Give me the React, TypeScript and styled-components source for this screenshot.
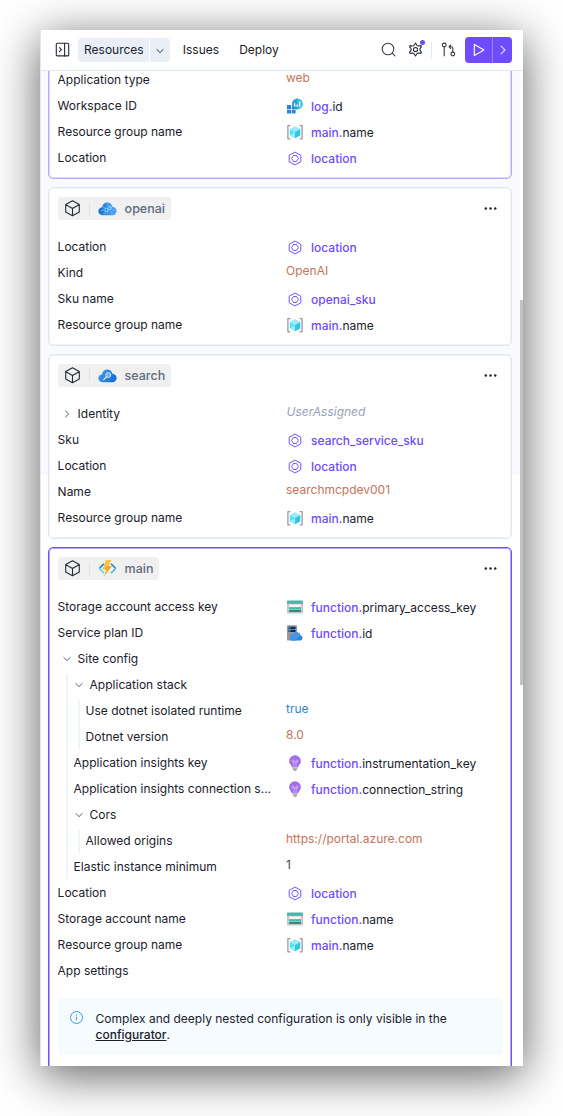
import React from "react";
import styled, { createGlobalStyle } from "styled-components";

const GlobalStyle = createGlobalStyle`
  *, *::before, *::after { box-sizing: border-box; }
  body {
    margin: 0;
    background: #fff;
    font-family: Inter, "Liberation Sans", sans-serif;
    font-size: 12px;
    color: #1b202b;
  }
  svg { display: block; flex: none; }
`;

const Stage = styled.main`
  height: 1116px;
  padding: 30px 40px 50px;
  overflow: hidden;
`;

const Panel = styled.section`
  display: flex;
  flex-direction: column;
  width: 483px;
  height: 1036px;
  background: #fff;
  border-left: 1px solid #e3e8f0;
  box-shadow: 0 9px 44px rgba(0, 0, 0, 0.64);
`;

const Toolbar = styled.header`
  display: flex;
  align-items: center;
  flex: none;
  height: 41px;
  padding: 0 11px 1px 14px;
  border-bottom: 1px solid #e1e7ef;
`;

const Tab = styled.div<{ $gap: number }>`
  margin-left: ${(p) => p.$gap}px;
  line-height: 24px;
`;

const SplitTab = styled.div`
  display: flex;
  height: 24px;
  margin-left: 8px;
  border-radius: 4px;
  overflow: hidden;
  line-height: 24px;
`;

const SplitLabel = styled.span`
  width: 71px;
  padding-left: 6px;
  background: #eaeff7;
`;

const SplitToggle = styled.span`
  display: flex;
  align-items: center;
  justify-content: center;
  width: 20px;
  margin-left: 1px;
  padding-top: 2px;
  background: #eaeff7;
`;

const Tools = styled.div`
  display: flex;
  align-items: center;
  margin-left: auto;
`;

const ToolSlot = styled.span<{ $gap: number }>`
  position: relative;
  margin-right: ${(p) => p.$gap}px;
`;

const Dot = styled.i`
  position: absolute;
  top: -2px;
  right: -1.5px;
  width: 5px;
  height: 5px;
  border-radius: 50%;
  background: #6d4aff;
`;

const ToolDivider = styled.i`
  width: 1px;
  height: 16px;
  margin-right: 9px;
  background: #e3e9f1;
`;

const RunButton = styled.div`
  display: flex;
  width: 47px;
  height: 26px;
  border-radius: 4px;
  overflow: hidden;
  background: #6f4bff;
`;

const RunPart = styled.span<{ $width: number; $line?: boolean }>`
  display: flex;
  align-items: center;
  justify-content: center;
  width: ${(p) => p.$width}px;
  border-left: ${(p) => (p.$line ? "1px solid #9c83ff" : "0")};
`;

const Body = styled.div`
  display: flex;
  flex: 1;
  min-height: 0;
  background: linear-gradient(#f9faff 404px, #fff 404px);
`;

const Cards = styled.div`
  display: flex;
  flex-direction: column;
  gap: 8px;
  width: 479px;
  padding: 0 8px 0 7px;
  overflow: hidden;
`;

const ScrollTrack = styled.div`
  width: 3px;
  padding-top: 229px;
  background: #fdfdff;
`;

const ScrollThumb = styled.div`
  height: 385px;
  background: #c3c3c5;
`;

type Tone = "plain" | "linked" | "selected";
const tones: Record<Tone, [string, string]> = {
  plain: ["#e0e7f1", "#f0f4f9"],
  linked: ["#b5aafc", "#dcd6fe"],
  selected: ["#7450f5", "#b5a2fa"],
};

const Card = styled.article<{ $tone: Tone; $clip?: "top" | "bottom" }>`
  flex: none;
  padding: 9px 8.4px 7px 8.6px;
  background: #fff;
  border: 1px solid ${(p) => tones[p.$tone][0]};
  box-shadow: inset 0 0 0 1px ${(p) => tones[p.$tone][1]};
  border-radius: 5px;
  ${(p) => p.$clip === "top" && "margin-top: -5px; padding-top: 0;"}
  ${(p) => p.$clip === "bottom" && "height: 540px;"}
`;

const CardHead = styled.div`
  display: flex;
  align-items: center;
  justify-content: space-between;
  height: 23px;
  margin-bottom: 14px;
  padding-right: 5.6px;
`;

const Chip = styled.div`
  display: flex;
  align-items: center;
  height: 23px;
  padding: 0 6px 0 7.4px;
  background: #f0f0f1;
  border-radius: 4px;
  color: #5f6b7d;
  font-size: 12.5px;
  font-weight: 500;
`;

const ChipDivider = styled.i`
  width: 1px;
  height: 13px;
  margin: 0 8px 0 9px;
  background: #dce2ea;
`;

const ChipIcon = styled.span`
  margin-right: 7.6px;
`;

const RowLine = styled.div<{ $nested?: boolean }>`
  display: flex;
  height: 26px;
  padding-left: ${(p) => (p.$nested ? 4 : 0)}px;
`;

const Label = styled.div`
  flex: 1;
  min-width: 0;
  padding-right: 12px;
  line-height: 26px;
  white-space: nowrap;
  overflow: hidden;
  text-overflow: ellipsis;
`;

const GroupLabel = styled.div`
  display: flex;
  flex: 1;
  align-items: center;
  gap: 5.5px;
  padding-left: 4.5px;
  line-height: 26px;
`;

const ValueCell = styled.div`
  display: flex;
  align-items: center;
  flex: none;
  width: 216.6px;
  height: 26px;
`;

const Literal = styled.span<{ $kind: Kind }>`
  line-height: 22px;
  height: 26px;
  padding-left: ${(p) => (p.$kind === "muted" ? 0.6 : 0)}px;
  font-style: ${(p) => (p.$kind === "muted" ? "italic" : "normal")};
  color: ${(p) => ({ string: "#c3745a", bool: "#3182ce", number: "#3f4857", muted: "#94a3b8" })[p.$kind]};
`;

const RefText = styled.span`
  margin-left: 8px;
  line-height: 28px;
  height: 26px;
  b { font-weight: 500; color: #6f4bff; }
`;

const RefIcon = styled.span`
  width: 16px;
  margin-left: 1px;
`;

const Nest = styled.div`
  padding-left: 12px;
  background: linear-gradient(#f0f3f8, #f0f3f8) 8px 2px / 2px calc(100% - 3px) no-repeat;
`;

const Notice = styled.aside`
  display: flex;
  height: 56px;
  margin: 14px 0 0;
  padding: 13px 12.4px;
  gap: 12.6px;
  background: #f5fbff;
  border-radius: 4px;
  line-height: 16px;
  p { margin: 0; }
  u { font-weight: 500; text-underline-offset: 1px; }
`;

type Kind = "string" | "bool" | "number" | "muted";

const Chevron = ({ down, size = 10, color = "#5b626e" }: { down?: boolean; size?: number; color?: string }) => (
  <svg width={size} height={size} viewBox="0 0 10 10" fill="none" stroke={color} strokeWidth="1" strokeLinecap="round" strokeLinejoin="round">
    <path d={down ? "M1.8 3.5 5 6.6l3.2-3.1" : "M3.5 1.8 6.6 5 3.5 8.2"} />
  </svg>
);

const HexIcon = () => (
  <svg width="16" height="16" viewBox="0 0 16 16" fill="none" stroke="#6f4bff" strokeWidth=".95">
    <path d="M8 2.1 13.8 5.2v6.6L8 14.9l-5.8-3.1V5.2z" strokeLinejoin="round" />
    <path d="M6.5 5.5h3l1.9 3-1.9 3h-3l-1.9-3z" strokeLinejoin="round" />
  </svg>
);

const GroupIcon = () => (
  <svg width="16" height="16" viewBox="0 0 16 16">
    <path d="M3.4 1.7H.9v13.1h2.5M12.6 1.7h2.5v13.1h-2.5" fill="none" stroke="#9b9b9d" strokeWidth="1.3" strokeLinejoin="round" />
    <path d="M8 2.5 13.2 5.3v6L8 14.2l-5.2-2.9v-6z" fill="#50e2ff" />
    <path d="M8 2.5 13.2 5.3 8 8.3 2.8 5.3z" fill="#9cecff" />
    <path d="M8 8.3l5.2-3v6L8 14.2z" fill="#32c6e4" />
    <path d="M2.8 11.3 8 8.3v5.9z" fill="#9cecff" />
  </svg>
);

const LogIcon = () => (
  <svg width="16" height="16" viewBox="0 0 16 16">
    <path d="M0 7h4v4H0zM0 11.7h4v3.8H0zM4.7 11.7h3.9v3.8H4.7z" fill="#2b82dc" />
    <circle cx="10.5" cy="6" r="5.4" fill="#32c4e6" />
    <path d="M10.5.6A5.4 5.4 0 0 0 5 6v5.3h5.5z" fill="#2aa5d2" />
    <path d="M7.7 5.2v3.5M10.2 6.5v2.2M12.7 3.5v5.2" stroke="#fff" strokeWidth="1.3" />
    <path d="M4.7 9.2h3.7V11H4.7z" fill="#2b82dc" />
  </svg>
);

const StorageIcon = () => (
  <svg width="16" height="16" viewBox="0 0 16 16">
    <path d="M0 2h16v11.6a.8.8 0 0 1-.8.8H.8a.8.8 0 0 1-.8-.8z" fill="#c5c8c9" />
    <path d="M0 2.4a.9.9 0 0 1 .9-.9h14.2a.9.9 0 0 1 .9.9v2.3H0z" fill="#37bda9" />
    <path d="M2 5.7h12v2H2z" fill="#fff" />
    <path d="M2 8.3h12v2H2z" fill="#37bda9" />
    <path d="M2 11h12v1.9H2z" fill="#288577" />
  </svg>
);

const PlanIcon = () => (
  <svg width="16" height="16" viewBox="0 0 16 16">
    <rect x="0" y=".3" width="10" height="15.2" rx=".8" fill="#96989c" />
    <path d="M1.5 1.8h7V4h-7zM1.5 4.8h7V7h-7z" fill="#003067" />
    <path d="M2.2 2.3h1.3v1.2H2.2zM2.2 5.3h1.3v1.2H2.2z" fill="#50c8f5" />
    <path d="M6.2 15.5a3 3 0 0 1-.3-6A4.1 4.1 0 0 1 13.6 10.4a2.6 2.6 0 0 1-.2 5.1z" fill="#2f82e5" />
    <path d="M5.9 9.5a4.1 4.1 0 0 1 7.7.9L7.8 15.5H6.2a3 3 0 0 1-.3-6z" fill="#4696f1" />
  </svg>
);

const BulbIcon = () => (
  <svg width="16" height="16" viewBox="0 0 16 16">
    <path d="M8 .3a5.8 5.8 0 0 1 5.9 5.6c0 2.9-2.3 4-3 6.6H5.1c-.7-2.6-3-3.7-3-6.6A5.8 5.8 0 0 1 8 .3z" fill="#a36ee9" />
    <path d="M6.9 12.3V6c0-1.5-2.1-1.5-2.1 0 0 .8.8 1 2.1 1h2.2c1.3 0 2.1-.2 2.1-1 0-1.5-2.1-1.5-2.1 0v6.3" fill="none" stroke="#d6bdfa" strokeWidth=".8" />
    <path d="M5.8 13h4.4v1.5L8.9 15.9H7.1l-1.3-1.4z" fill="#b0b1b4" />
  </svg>
);

const CubeIcon = () => (
  <svg width="15" height="17" viewBox="0 0 15 17" fill="none" stroke="#252b37" strokeWidth="1.1" strokeLinejoin="round" strokeLinecap="round">
    <path d="M7.5 .8 14.3 4.6v7.4L7.5 15.8 .7 12V4.6zM.9 4.7l6.6 3.7 6.6-3.7M7.5 8.4v7.4" />
  </svg>
);

const cloudPath = "M4.5 13.2A4.3 4.3 0 0 1 .4 9.1c0-2 1.5-3.6 3.6-3.9C4.5 2.4 6.6.6 9.3.6c2.6 0 4.6 1.6 5.2 4.2 2.3.2 4.1 1.8 4.1 4.1 0 2.4-1.8 4.3-4.3 4.3z";

const OpenAiIcon = () => (
  <svg width="19" height="14" viewBox="0 0 19 14">
    <defs>
      <linearGradient id="brain" x1="0" x2="1"><stop stopColor="#1671cc" /><stop offset="1" stopColor="#55a5f8" /></linearGradient>
    </defs>
    <path d={cloudPath} fill="url(#brain)" />
    <path d="M9.4.9v4M9.4 9.2v4M5.2 3.5v2.2h2.3M6.1 13v-2.7h2M10.5 3.5h2v2.4h2M14 13v-3h-3" fill="none" stroke="#8bc8f7" strokeWidth=".5" />
    <path d="M7 6.3h3v3H7zM10.8 4.8h2.4v2.7h-2.4z" fill="none" stroke="#91e2fb" strokeWidth=".8" />
    <path d="M2.8 8.5h2.4V7M14.2 8.5h2.5" fill="none" stroke="#91d0fb" strokeWidth=".5" />
  </svg>
);

const SearchServiceIcon = () => (
  <svg width="19" height="14" viewBox="0 0 19 14">
    <defs>
      <linearGradient id="cloud" x1="0" x2="1" y2=".3"><stop stopColor="#4c99ef" /><stop offset="1" stopColor="#1472d3" /></linearGradient>
    </defs>
    <path d={cloudPath} fill="url(#cloud)" />
    <circle cx="10.3" cy="6" r="2.5" fill="#76b1f5" stroke="#e3f0ff" strokeWidth=".8" />
    <path d="m8.3 8-2.6 2.6" stroke="#e3f0ff" strokeWidth="1.1" strokeLinecap="round" />
  </svg>
);

const FunctionIcon = () => (
  <svg width="19" height="17" viewBox="0 0 19 17" fill="none">
    <path d="M6 3.8 1.3 8.5" stroke="#1580d8" strokeWidth="1.6" />
    <path d="M1.2 8.3 6 13.2" stroke="#50d4f6" strokeWidth="1.6" />
    <path d="m13 3.8 4.7 4.7" stroke="#1580d8" strokeWidth="1.6" />
    <path d="M17.8 8.3 13 13.2" stroke="#32bce7" strokeWidth="1.6" />
    <path d="M8 .3h5.1L10 6.1h4L5.8 16.7 8.4 9.5H4.8z" fill="#faa51e" />
    <path d="M8 .3h5.1L10 6.1 6.6 9.5H4.8z" fill="#ffc13b" />
  </svg>
);

const MoreIcon = () => (
  <svg width="13" height="5" viewBox="0 0 13 5" fill="#1e2939">
    <circle cx="1.8" cy="2.5" r="1.25" /><circle cx="6.5" cy="2.5" r="1.25" /><circle cx="11.2" cy="2.5" r="1.25" />
  </svg>
);

const PanelIcon = () => (
  <svg width="15" height="15" viewBox="0 0 15 15" fill="none" stroke="#252b36" strokeWidth="1.1" strokeLinejoin="round">
    <rect x="1.3" y="1.3" width="12.4" height="12.6" rx="1" />
    <path d="M9.6 1.3v12.6M4.4 5.6l2 2-2 2" strokeLinecap="round" />
  </svg>
);

const SearchIcon = () => (
  <svg width="15" height="15" viewBox="0 0 15 15" fill="none" stroke="#3b4350" strokeWidth="1.1" strokeLinecap="round">
    <circle cx="7" cy="7" r="5.8" /><path d="m11.2 11.2 2.7 2.7" />
  </svg>
);

const GearIcon = () => (
  <svg width="15" height="15" viewBox="0 0 24 24" fill="none" stroke="#252b36" strokeWidth="1.7" strokeLinejoin="round">
    <path d="M10.3 4.3 12 1.6l1.7 2.7 1.2 1.8 2.2.2 3.8-.5.5 1.9-2.2 2.9v2.8l2.2 2.9-.5 1.9-3.8-.5-2.2.2-1.2 1.8L12 22.4l-1.7-2.7-1.2-1.8-2.2-.2-3.8.5-.5-1.9 2.2-2.9v-2.8L2.6 7.7l.5-1.9 3.8.5 2.2-.2z" />
    <circle cx="12" cy="12" r="3.3" />
  </svg>
);

const BranchIcon = () => (
  <svg width="15" height="15" viewBox="0 0 15 15" fill="none" stroke="#353c48" strokeWidth="1.1" strokeLinecap="round" strokeLinejoin="round">
    <circle cx="3.2" cy="3" r="1.9" /><circle cx="11.8" cy="12" r="1.9" />
    <path d="M3.2 4.9v8.9M11.8 10.1V6.2c0-1-.5-1.5-1.5-1.5H8.2M9.7 3 8 4.7l1.7 1.7" />
  </svg>
);

const PlayIcon = () => (
  <svg width="12" height="14" viewBox="0 0 12 14" fill="none" stroke="#fff" strokeWidth="1.1" strokeLinejoin="round">
    <path d="M1.3 1.4 11 7l-9.7 5.6z" />
  </svg>
);

const InfoIcon = () => (
  <svg width="13" height="13" viewBox="0 0 13 13" fill="none" stroke="#3c97d9" strokeWidth="1">
    <circle cx="6.5" cy="6.5" r="6" /><path d="M6.5 5.7v3.6M6.5 3.4v1.1" />
  </svg>
);

const icons = { hex: HexIcon, group: GroupIcon, log: LogIcon, storage: StorageIcon, plan: PlanIcon, bulb: BulbIcon };

type RowProps = {
  label: string;
  nested?: boolean;
  icon?: keyof typeof icons;
  target?: string;
  attr?: string;
  value?: string;
  kind?: Kind;
};

const Row = ({ label, nested, icon, target, attr, value, kind = "string" }: RowProps) => {
  const Icon = icon && icons[icon];
  return (
    <RowLine $nested={nested}>
      <Label>{label}</Label>
      <ValueCell>
        {Icon && <RefIcon><Icon /></RefIcon>}
        {target && <RefText><b>{target}{attr && "."}</b>{attr}</RefText>}
        {value && <Literal $kind={kind}>{value}</Literal>}
      </ValueCell>
    </RowLine>
  );
};

const Group = ({ label, open, value, children }: { label: string; open?: boolean; value?: string; children?: React.ReactNode }) => (
  <>
    <RowLine>
      <GroupLabel><Chevron down={open} />{label}</GroupLabel>
      <ValueCell>{value && <Literal $kind="muted">{value}</Literal>}</ValueCell>
    </RowLine>
    {open && <Nest>{children}</Nest>}
  </>
);

const Head = ({ name, icon }: { name: string; icon: React.ReactNode }) => (
  <CardHead>
    <Chip><CubeIcon /><ChipDivider /><ChipIcon>{icon}</ChipIcon>{name}</Chip>
    <MoreIcon />
  </CardHead>
);

const Location = () => <Row label="Location" icon="hex" target="location" />;
const ResourceGroup = () => <Row label="Resource group name" icon="group" target="main" attr="name" />;

export default function App() {
  return (
    <Stage>
      <GlobalStyle />
      <Panel>
        <Toolbar>
          <PanelIcon />
          <SplitTab>
            <SplitLabel>Resources</SplitLabel>
            <SplitToggle><Chevron down color="#252b36" /></SplitToggle>
          </SplitTab>
          <Tab $gap={12.8}>Issues</Tab>
          <Tab $gap={20}>Deploy</Tab>
          <Tools>
            <ToolSlot $gap={12.5}><SearchIcon /></ToolSlot>
            <ToolSlot $gap={8}><GearIcon /><Dot /></ToolSlot>
            <ToolDivider />
            <ToolSlot $gap={9}><BranchIcon /></ToolSlot>
            <RunButton>
              <RunPart $width={27}><PlayIcon /></RunPart>
              <RunPart $width={20} $line><Chevron color="#ddd4ff" size={12} /></RunPart>
            </RunButton>
          </Tools>
        </Toolbar>
        <Body>
          <Cards>
            <Card $tone="linked" $clip="top">
              <Row label="Application type" value="web" />
              <Row label="Workspace ID" icon="log" target="log" attr="id" />
              <ResourceGroup />
              <Location />
            </Card>
            <Card $tone="plain">
              <Head name="openai" icon={<OpenAiIcon />} />
              <Location />
              <Row label="Kind" value="OpenAI" />
              <Row label="Sku name" icon="hex" target="openai_sku" />
              <ResourceGroup />
            </Card>
            <Card $tone="plain">
              <Head name="search" icon={<SearchServiceIcon />} />
              <Group label="Identity" value="UserAssigned" />
              <Row label="Sku" icon="hex" target="search_service_sku" />
              <Location />
              <Row label="Name" value="searchmcpdev001" />
              <ResourceGroup />
            </Card>
            <Card $tone="selected" $clip="bottom">
              <Head name="main" icon={<FunctionIcon />} />
              <Row label="Storage account access key" icon="storage" target="function" attr="primary_access_key" />
              <Row label="Service plan ID" icon="plan" target="function" attr="id" />
              <Group label="Site config" open>
                <Group label="Application stack" open>
                  <Row nested label="Use dotnet isolated runtime" value="true" kind="bool" />
                  <Row nested label="Dotnet version" value="8.0" />
                </Group>
                <Row nested label="Application insights key" icon="bulb" target="function" attr="instrumentation_key" />
                <Row nested label="Application insights connection s..." icon="bulb" target="function" attr="connection_string" />
                <Group label="Cors" open>
                  <Row nested label="Allowed origins" value="https://portal.azure.com" />
                </Group>
                <Row nested label="Elastic instance minimum" value="1" kind="number" />
              </Group>
              <Location />
              <Row label="Storage account name" icon="storage" target="function" attr="name" />
              <ResourceGroup />
              <Row label="App settings" />
              <Notice>
                <InfoIcon />
                <p>Complex and deeply nested configuration is only visible in the <u>configurator</u>.</p>
              </Notice>
            </Card>
          </Cards>
          <ScrollTrack><ScrollThumb /></ScrollTrack>
        </Body>
      </Panel>
    </Stage>
  );
}
